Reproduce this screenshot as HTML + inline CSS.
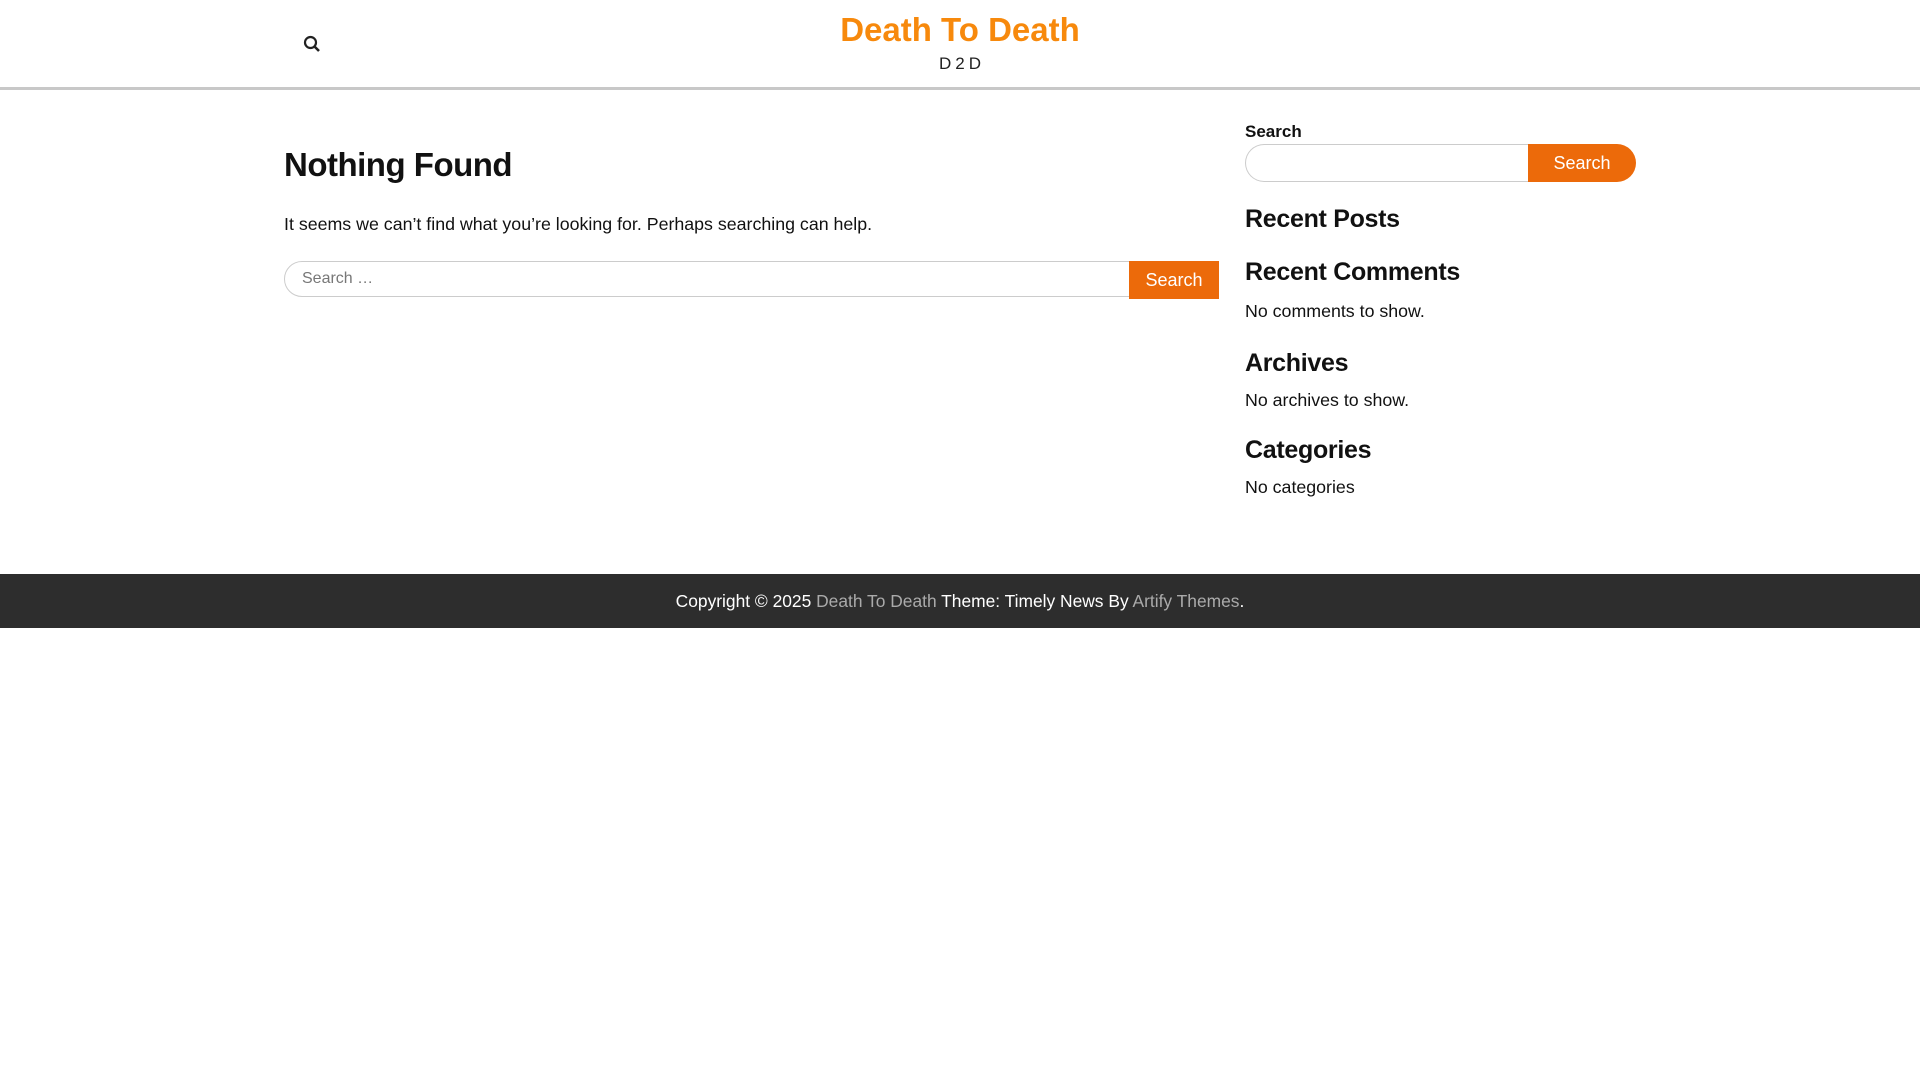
<!DOCTYPE html>
<html><head><meta charset="utf-8"><style>
*{margin:0;padding:0;box-sizing:border-box}
body{width:1920px;height:1080px;background:#fff;font-family:"Liberation Sans",sans-serif;color:#111;position:relative;overflow:hidden}
.a{position:absolute;white-space:nowrap}
header{position:absolute;left:0;top:0;width:1920px;height:90px;border-bottom:3px solid #c8c8c8}
h2{font-weight:bold;font-size:25px;letter-spacing:-0.3px}
.p{font-size:17.8px;color:#111}
footer{position:absolute;left:0;top:574px;width:1920px;height:54px;background:#2d2d2d;color:#fff;font-size:17.4px;text-align:center;line-height:54px}
footer span{color:#aaa}
</style></head><body>
<header>
<svg class="a" style="left:303px;top:35px" width="18" height="18" viewBox="0 0 18 18"><circle cx="7.5" cy="7.5" r="5.5" fill="none" stroke="#222" stroke-width="2.2"/><line x1="11.5" y1="11.5" x2="16" y2="16" stroke="#222" stroke-width="2.6"/></svg>
<div class="a" style="left:0;width:1920px;text-align:center;top:11px;font-size:33px;font-weight:bold;color:#f7890c;letter-spacing:0">Death To Death</div>
<div class="a" style="left:0;width:1920px;text-align:center;top:54px;font-size:17px;letter-spacing:4px;color:#222;padding-left:4px">D2D</div>
</header>
<div class="a" style="left:284px;top:146px;font-size:33px;font-weight:bold;letter-spacing:-0.5px">Nothing Found</div>
<div class="a p" style="left:284px;top:214px">It seems we can’t find what you’re looking for. Perhaps searching can help.</div>
<div class="a" style="left:284px;top:261px;width:846px;height:36px;border:1px solid #ccc;border-radius:18px 0 0 18px;font-size:16px;color:#777;padding:8px 0 0 17px">Search …</div>
<div class="a" style="left:1129px;top:261px;width:90px;height:38px;background:#ec6a0a;color:#fff;font-size:18px;text-align:center;line-height:38px">Search</div>
<div class="a" style="left:1245px;top:122px;font-size:17px;font-weight:bold">Search</div>
<div class="a" style="left:1245px;top:144px;width:284px;height:38px;border:1px solid #ccc;border-right:none;border-radius:19px 0 0 19px"></div>
<div class="a" style="left:1528px;top:144px;width:108px;height:38px;background:#ec6a0a;color:#fff;font-size:18px;text-align:center;line-height:38px;border-radius:0 19px 19px 0">Search</div>
<h2 class="a" style="left:1245px;top:205px">Recent Posts</h2>
<h2 class="a" style="left:1245px;top:258px">Recent Comments</h2>
<div class="a p" style="left:1245px;top:301px">No comments to show.</div>
<h2 class="a" style="left:1245px;top:349px">Archives</h2>
<div class="a p" style="left:1245px;top:390px">No archives to show.</div>
<h2 class="a" style="left:1245px;top:436px">Categories</h2>
<div class="a p" style="left:1245px;top:477px">No categories</div>
<footer>Copyright © 2025 <span>Death To Death</span> Theme: Timely News By <span>Artify Themes</span>.</footer>
</body></html>
